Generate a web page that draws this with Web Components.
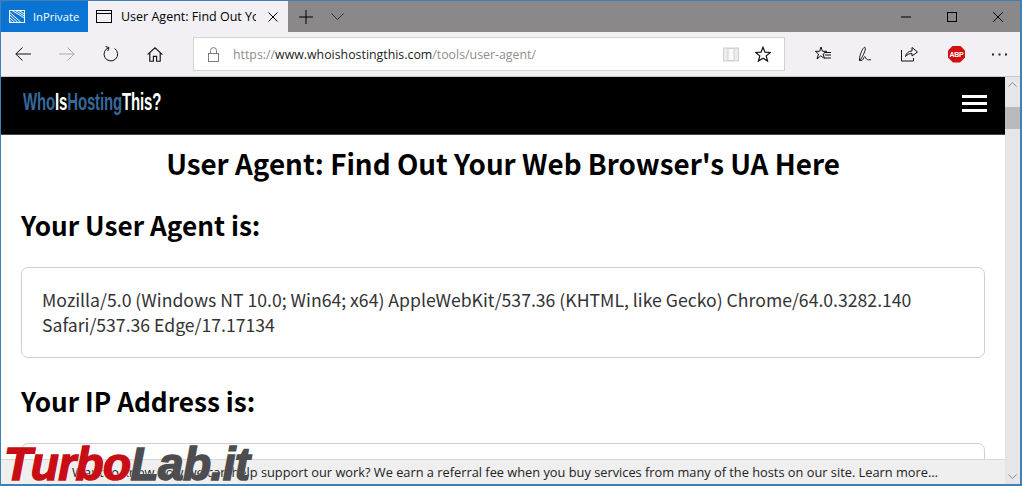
<!DOCTYPE html>
<html>
<head>
<meta charset="utf-8">
<title>User Agent</title>
<style>
  html, body { margin: 0; height: 100%; overflow: hidden; background: #fff; }
  body { font-family: "Noto Sans CJK SC", "Open Sans", sans-serif; }
</style>
</head>
<body>
<browser-window>
  <title-bar></title-bar>
  <tool-bar></tool-bar>
  <page-view>
    <site-header></site-header>
    <page-body>
      <h-title>User Agent: Find Out Your Web Browser's UA Here</h-title>
      <h-section>Your User Agent is:</h-section>
      <info-box>Mozilla/5.0 (Windows NT 10.0; Win64; x64) AppleWebKit/537.36 (KHTML, like Gecko) Chrome/64.0.3282.140 Safari/537.36 Edge/17.17134</info-box>
      <h-section class="second">Your IP Address is:</h-section>
      <info-box></info-box>
    </page-body>
    <notice-bar>Want to know how we can help support our work? We earn a referral fee when you buy services from many of the hosts on our site. Learn more…</notice-bar>
  </page-view>
  <turbo-mark></turbo-mark>
</browser-window>

<script>
// small helper so every class doesn't repeat the same shadow setup
class Base extends HTMLElement {
  constructor() {
    super()
    this.attachShadow({ mode: "open" })
    this.shadowRoot.innerHTML = this.constructor.markup
  }
}

class BrowserWindow extends Base {
  static markup = `
    <style>
      :host {
        display: flex;
        flex-direction: column;
        position: relative;
        width: 1022px;
        height: 486px;
        box-sizing: border-box;
        border: solid #3f80b5;
        border-width: 1px 2px 2px 1px;
        overflow: hidden;
      }
    </style>
    <slot></slot>`
}

class TitleBar extends Base {
  static markup = `
    <style>
      :host {
        display: flex;
        align-items: stretch;
        height: 31px;
        flex: none;
        background: #8a8889;
        color: #000;
        font: 12px "Open Sans", sans-serif;
      }
      .private {
        width: 87px;
        background: #0a74d4;
        color: #fff;
        display: flex;
        align-items: center;
        box-sizing: border-box;
        padding: 0 0 0 8px;
        gap: 8px;
        font-size: 11.200px;
      }
      .tab {
        width: 200px;
        background: #f2f0f5;
        display: flex;
        align-items: center;
        box-sizing: border-box;
        padding: 0 0 0 8px;
        gap: 9px;
        font-size: 12.500px;
      }
      .tab span {
        width: 135px;
        overflow: hidden;
        white-space: nowrap;
      }
      .tab .x { margin-left: 3px; }
      .new { display: flex; align-items: center; gap: 18px; margin-left: 11px; }
      .ctl { margin-left: auto; display: flex; align-items: center; gap: 36px; padding-right: 17px; }
      svg { display: block; fill: none; stroke: #000; stroke-width: 1; flex: none; }
    </style>
    <div class="private">
      <svg width="16" height="13" viewBox="0 0 16 13" style="stroke:#fff">
        <rect x=".5" y=".5" width="15" height="12"/>
        <path d="M3 .5 15.500 8M6.500 .5l9 5.500M10 .5l5.500 3.500M.5 2 12 12.500M.5 4.500 9 12.500M.5 7.500 6 12.500M.5 10 3 12.500" />
      </svg>
      <span>InPrivate</span>
    </div>
    <div class="tab">
      <svg width="16" height="13" viewBox="0 0 16 13"><rect x=".5" y=".5" width="15" height="12"/><path d="M.5 3.500h15"/></svg>
      <span>User Agent: Find Out Your Web Browser</span>
      <svg class="x" width="10" height="10" viewBox="0 0 10 10"><path d="M.5.5l9 9M9.500.5l-9 9"/></svg>
    </div>
    <div class="new">
      <svg width="14" height="14" viewBox="0 0 14 14"><path d="M7 0v14M0 7h14"/></svg>
      <svg width="13" height="7" viewBox="0 0 13 7" style="stroke:#333"><path d="M.5.5l6 6 6-6"/></svg>
    </div>
    <div class="ctl">
      <svg width="10" height="2" viewBox="0 0 10 2"><path d="M0 1h10"/></svg>
      <svg width="10" height="10" viewBox="0 0 10 10"><rect x=".5" y=".5" width="9" height="9"/></svg>
      <svg width="10" height="10" viewBox="0 0 10 10"><path d="M.2.2l9.600 9.600M9.800.2.2 9.800"/></svg>
    </div>`
}

class ToolBar extends Base {
  static markup = `
    <style>
      :host {
        display: flex;
        align-items: center;
        height: 45px;
        flex: none;
        box-sizing: border-box;
        background: #f2f0f5;
        border-bottom: 1px solid #c9c8cb;
        padding: 0 0 0 14px;
      }
      .nav { display: flex; align-items: center; gap: 28px; }
      .addr {
        display: flex;
        align-items: center;
        width: 592px;
        height: 34px;
        box-sizing: border-box;
        margin: 0 0 0 30px;
        background: #fff;
        border: 1px solid #d2d2d2;
        font: 12.350px "Open Sans", sans-serif;
        padding: 0 13px 0 14px;
        color: #8d8d8d;
      }
      .addr b { font-weight: 400; color: #222; }
      .addr .url { margin-left: 14px; flex: 1; white-space: nowrap; }
      .tools { display: flex; align-items: center; margin-left: 30px; gap: 27px; }
      .abp {
        width: 17px; height: 17px;
        background: #d50f0f;
        clip-path: polygon(29% 0, 71% 0, 100% 29%, 100% 71%, 71% 100%, 29% 100%, 0 71%, 0 29%);
        color: #fff;
        font: bold 7px "Liberation Sans", sans-serif;
        display: flex; align-items: center; justify-content: center;
        letter-spacing: -.2px;
        margin-left: 3px;
      }
      svg { display: block; fill: none; stroke: #111; stroke-width: 1; flex: none; }
    </style>
    <div class="nav">
      <svg width="16" height="14" viewBox="0 0 16 14"><path d="M16 7H.8M7.500.5.8 7l6.700 6.500"/></svg>
      <svg width="16" height="14" viewBox="0 0 16 14" style="stroke:#a9a8ab"><path d="M0 7h15.200M8.500.5 15.200 7l-6.700 6.500"/></svg>
      <svg width="16" height="16" viewBox="0 0 16 16"><path d="M6 1.600A6.800 6.800 0 1 0 11.500 2.400M2.600 .4 6 1.700 4.800 5"/></svg>
      <svg width="16" height="15" viewBox="0 0 16 15" style="stroke-width:1.150"><path d="M.6 7.600 8 .8l7.400 6.800M2.800 6v8.200h3.600V9.400h3.200v4.800h3.600V6"/></svg>
    </div>
    <div class="addr">
      <svg width="11" height="15" viewBox="0 0 11 15" style="stroke:#7d7d7d"><rect x=".5" y="6.500" width="10" height="8"/><path d="M2.500 6.500V3.600a3 3 0 0 1 6 0v2.900"/></svg>
      <div class="url">https://<b>www.whoishostingthis.com</b>/tools/user-agent/</div>
      <svg width="16" height="15" viewBox="0 0 16 15" style="stroke:#d0d0d0;margin-right:16px"><rect x=".5" y="1" width="15" height="13" fill="#ececec"/><rect x="5" y="1.500" width="6" height="12" fill="#fafafa"/></svg>
      <svg width="16" height="16" viewBox="0 0 16 16" style="stroke-width:1.200"><path d="M8 1.200 10 6.200l5.400.3-4.200 3.400 1.400 5.200L8 12.200l-4.600 2.900 1.400-5.200L.6 6.500 6 6.200z"/></svg>
    </div>
    <div class="tools">
      <svg width="16" height="16" viewBox="0 0 16 16"><path d="M6 1 7.400 5.300H11.800L8.200 8 9.500 12.500 5.800 9.800 2 13 3.500 8 .4 5.300H4.700zM9.500 6.500H16M10 9H16M10 12H16"/></svg>
      <svg width="16" height="16" viewBox="0 0 16 16" style="stroke-width:.95"><path d="M1.500 14.500C1 11 4 3 6 1.500c1.500-1 1.800 1.500.5 4.500C5.300 9 3.500 13 1.500 14.500zM1.500 14.500c2 .5 3.500-.5 4.500-3 .5-1 1-1.500 1.500 0 .5 1.500 1.500 2.300 3 2.300h2.500"/></svg>
      <svg width="17" height="16" viewBox="0 0 17 16"><path d="M.5 4v11h12v-3M4.500 10.500C5 7 8 5 11 5V1.500L16.500 6 11 10V7.500c-2.500 0-5 1-6.500 3z"/></svg>
      <div class="abp">ABP</div>
      <svg width="15" height="3" viewBox="0 0 15 3" style="stroke:none;fill:#222"><rect y=".5" width="2" height="2"/><rect x="6.500" y=".5" width="2" height="2"/><rect x="13" y=".5" width="2" height="2"/></svg>
    </div>`
}

class PageView extends Base {
  static markup = `
    <style>
      :host {
        display: grid;
        grid-template-columns: 1fr 15px;
        grid-template-rows: 1fr 25px;
        flex: 1;
        min-height: 0;
        position: relative;
        background: #fff;
      }
      .scroll { grid-column: 1; grid-row: 1 / 3; overflow: hidden; min-height: 0; }
      .bar {
        grid-column: 2; grid-row: 1 / 3;
        background: #e6e5e7;
        position: relative;
      }
      .bar i {
        position: absolute; left: 0; right: 0; top: 30px; height: 22px; background: #bab9bb;
      }
      .bar svg { position: absolute; left: 3px; fill: none; stroke: #8c8c8c; }
      .bar .up { top: 5px; }
      .bar .down { bottom: 5px; }
      .notice {
        grid-column: 1; grid-row: 2; z-index: 1; min-width: 0;
      }
    </style>
    <div class="scroll"><slot></slot></div>
    <div class="notice"><slot name="notice"></slot></div>
    <div class="bar">
      <svg class="up" width="9" height="5" viewBox="0 0 9 5"><path d="M.5 4.500l4-4 4 4"/></svg>
      <i></i>
      <svg class="down" width="9" height="5" viewBox="0 0 9 5"><path d="M.5.500l4 4 4-4"/></svg>
    </div>`
  connectedCallback() {
    const bar = this.querySelector("notice-bar")
    if (bar) bar.slot = "notice"
  }
}

class SiteHeader extends Base {
  static markup = `
    <style>
      :host {
        display: flex;
        align-items: center;
        justify-content: space-between;
        height: 58px;
        box-sizing: border-box;
        background: #000;
        border-bottom: 1px solid #444;
        padding: 0 18px 0 22px;
      }
      .logo {
        font: bold 24px/24px "Liberation Sans", sans-serif;
        color: #fff;
        transform: scaleX(.623);
        transform-origin: left center;
        white-space: nowrap;
        letter-spacing: -.2px;
        margin-top: -7px;
      }
      .logo span { color: #36689c; }
      .burger { display: grid; gap: 4px; margin-top: -4px; }
      .burger i { display: block; width: 25px; height: 3px; background: #fff; }
    </style>
    <div class="logo"><span>Who</span>Is<span>Hosting</span>This?</div>
    <div class="burger"><i></i><i></i><i></i></div>`
}

class PageBody extends Base {
  static markup = `
    <style>
      :host { display: block; padding: 0 20px; color: #000; }
    </style>
    <slot></slot>`
}

class HTitle extends Base {
  static markup = `
    <style>
      :host {
        display: block;
        text-align: center;
        font: bold 27.800px/30px "Noto Sans CJK SC", "Open Sans", sans-serif;
        margin: 13px 0 0;
        white-space: nowrap;
      }
    </style>
    <slot></slot>`
}

class HSection extends Base {
  static markup = `
    <style>
      :host {
        display: block;
        font: bold 26.200px/32px "Noto Sans CJK SC", "Open Sans", sans-serif;
        margin: 31px 0 26px;
      }
      :host(.second) { margin: 27px 0 26px; }
    </style>
    <slot></slot>`
}

class InfoBox extends Base {
  static markup = `
    <style>
      :host {
        display: block;
        box-sizing: border-box;
        min-height: 91px;
        border: 1px solid #cfcfcf;
        border-radius: 7px;
        padding: 19px 20px 20px;
        font: 17.640px/25px "Noto Sans CJK SC", "Open Sans", sans-serif;
        color: #333;
        background: #fff;
      }
    </style>
    <slot></slot>`
}

class NoticeBar extends Base {
  static markup = `
    <style>
      :host {
        display: block;
        height: 25px;
        box-sizing: border-box;
        background: #efefef;
        border-top: 1px solid #d8d8d8;
        font: 12.800px/24px "Open Sans", sans-serif;
        color: #222;
        text-align: center;
        white-space: nowrap;
        overflow: hidden;
        padding-left: 4px;
      }
    </style>
    <slot></slot>`
}

class TurboMark extends Base {
  static markup = `
    <style>
      :host {
        position: absolute;
        z-index: 2;
        left: 3px;
        bottom: -3px;
        display: block;
        font: italic 900 46px/46px "Liberation Sans", sans-serif;
        letter-spacing: -.6px;
        white-space: nowrap;
        -webkit-text-stroke: 1.500px currentColor;
        text-shadow: 1px 1px 0 rgba(255,255,255,.65), -1px -1px 0 rgba(255,255,255,.65);
      }
      .a { color: #c80d16; }
      .b { color: #4d4d4f; }
    </style>
    <span class="a">Turbo</span><span class="b">Lab.it</span>`
}

customElements.define("browser-window", BrowserWindow)
customElements.define("title-bar", TitleBar)
customElements.define("tool-bar", ToolBar)
customElements.define("page-view", PageView)
customElements.define("site-header", SiteHeader)
customElements.define("page-body", PageBody)
customElements.define("h-title", HTitle)
customElements.define("h-section", HSection)
customElements.define("info-box", InfoBox)
customElements.define("notice-bar", NoticeBar)
customElements.define("turbo-mark", TurboMark)
</script>
</body>
</html>
